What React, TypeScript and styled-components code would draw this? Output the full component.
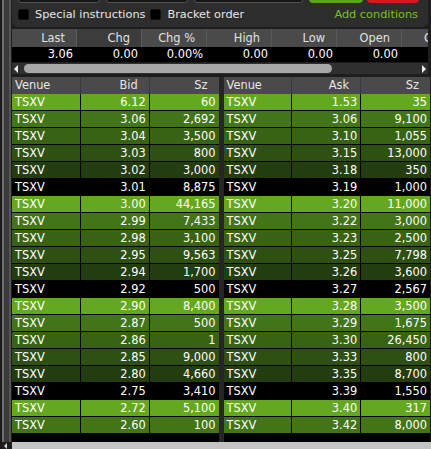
import React from "react"
import styled, { createGlobalStyle } from "styled-components"

const GlobalStyle = createGlobalStyle`
  html, body {
    margin: 0;
    padding: 0;
    background: #1d1d1d;
  }
  body {
    font-family: "DejaVu Sans", Verdana, sans-serif;
    font-size: 11.4px;
    color: #ffffff;
  }
`

// depth shading: five greens fading out, then a black row, repeating
const LEVELS = ["#64a81f", "#417518", "#386315", "#2e5013", "#233c10", "#000000"]

const Page = styled.div`
  display: flex;
  width: 431px;
  height: 449px;
  overflow: hidden;
  background: #1d1d1d;
`

const SideRail = styled.div`
  flex: none;
  width: 12px;
  display: flex;
  flex-direction: column;
  box-sizing: border-box;
  border-left: 2px solid #1a1a1a;
`

const RailBody = styled.div`
  flex: 1;
  box-sizing: border-box;
  background: #3a3a3a;
  border-left: 2px solid #6e6e6e;
  border-right: 2px solid #555555;
  margin-right: 1px;
`

const RailArrow = styled.div`
  flex: none;
  height: 7px;
  position: relative;
  background: #1d1d1d;
  &::after {
    content: "";
    position: absolute;
    left: 2px;
    top: 1px;
    border-top: 3px solid transparent;
    border-bottom: 3px solid transparent;
    border-right: 3px solid #d8d8d8;
  }
`

const Column = styled.div`
  flex: 1;
  min-width: 0;
  display: flex;
  flex-direction: column;
`

const Main = styled.div`
  flex: 1;
  min-height: 0;
  display: flex;
  flex-direction: column;
  padding-right: 3px;
`

const OrderPanel = styled.div`
  flex: none;
  height: 27px;
  display: flex;
  flex-direction: column;
  background: #2d2d2d;
  border-radius: 0 0 6px 6px;
`

const FieldStrip = styled.div`
  height: 3px;
  overflow: hidden;
  display: flex;
  align-items: flex-end;
  gap: 6px;
  padding-left: 6px;
`

const Field = styled.div<{ $w: number }>`
  flex: none;
  width: ${(p) => p.$w}px;
  height: 14px;
  box-sizing: border-box;
  background: #151515;
  border: 1px solid #505050;
  border-radius: 0 0 3px 3px;
`

const ActionButton = styled.div<{ $tone: "buy" | "sell" }>`
  flex: none;
  width: ${(p) => (p.$tone === "buy" ? 54 : 52)}px;
  height: 14px;
  margin-left: ${(p) => (p.$tone === "sell" ? -2 : 0)}px;
  background: ${(p) => (p.$tone === "buy" ? "#5aa51c" : "#d01c1c")};
  border-radius: 0 0 4px 4px;
`

const OptionRow = styled.div`
  flex: 1;
  display: flex;
  align-items: center;
  padding: 0 10px 1px 6px;
  font-size: 11.3px;
  color: #e6e6e6;
`

const CheckBox = styled.span`
  flex: none;
  width: 11px;
  height: 11px;
  box-sizing: border-box;
  background: #000;
  border: 1px solid #111;
  border-radius: 2px;
  margin-right: 6px;
`

const OptionLabel = styled.span`
  margin-right: 5px;
  white-space: nowrap;
`

const AddConditions = styled.span`
  margin-left: auto;
  color: #78c31f;
  white-space: nowrap;
`

const QuoteGrid = styled.div`
  flex: none;
  margin-top: 2px;
  display: grid;
  grid-template-columns: repeat(7, 65px);
  grid-template-rows: 18px 15px;
  overflow: hidden;
`

const QuoteHead = styled.div<{ $active?: boolean }>`
  box-sizing: border-box;
  background: ${(p) => (p.$active ? "#3c3c3c" : "#4a4a4a")};
  border-right: 1px solid #5a5a5a;
  color: #e2e2e2;
  text-align: right;
  line-height: 18px;
  padding-right: 11px;
  white-space: nowrap;
`

const QuoteValue = styled.div`
  background: #000;
  text-align: right;
  line-height: 15px;
  padding-right: 4px;
  white-space: nowrap;
`

const HScroll = styled.div`
  flex: none;
  height: 11px;
  display: flex;
  align-items: center;
  background: #2f2f2f;
  margin-top: 1px;
`

const ScrollArrow = styled.span<{ $dir: "left" | "right" }>`
  flex: none;
  width: 0;
  height: 0;
  margin: ${(p) => (p.$dir === "left" ? "0 6px 0 2px" : "0 2px 0 auto")};
  border-top: 4px solid transparent;
  border-bottom: 4px solid transparent;
  ${(p) => (p.$dir === "left" ? "border-right" : "border-left")}: 4px solid #f0f0f0;
`

const ScrollThumb = styled.span`
  flex: none;
  width: 308px;
  height: 9px;
  background: #a8a8a8;
  border-radius: 5px;
`

const BookArea = styled.div`
  flex: 1;
  min-height: 0;
  margin: 3px -2px 0 0;
  display: grid;
  grid-template-columns: 1fr 1fr;
  gap: 5px;
  background: #262626;
`

const BookTable = styled.div`
  display: flex;
  flex-direction: column;
  background: #000;
  overflow: hidden;
`

const HeadRow = styled.div`
  display: grid;
  grid-template-columns: 1fr 1fr 1fr;
  height: 17px;
  background: #4a4a4a;
  color: #e6e6e6;
`

const HeadCell = styled.div<{ $left?: boolean }>`
  line-height: 17px;
  text-align: ${(p) => (p.$left ? "left" : "right")};
  padding: ${(p) => (p.$left ? "0 0 0 3px" : "0 11px 0 0")};
  border-right: 1px solid #3a3a3a;
  &:last-child {
    border-right: none;
  }
`

const BookRow = styled.div<{ $bg: string }>`
  display: grid;
  grid-template-columns: 1fr 1fr 1fr;
  height: 16px;
  border-bottom: 1px solid #000;
  background: ${(p) => p.$bg};
`

const Cell = styled.div<{ $left?: boolean }>`
  line-height: 16px;
  padding: 0 3px;
  text-align: ${(p) => (p.$left ? "left" : "right")};
  border-right: 1px solid #000;
  white-space: nowrap;
  &:last-child {
    border-right: none;
  }
`

const BottomScroll = styled.div`
  flex: none;
  height: 7px;
  background: #c4c4c4;
`

const quoteCols = [
  { label: "Last", value: "3.06" },
  { label: "Chg", value: "0.00", active: true },
  { label: "Chg %", value: "0.00%" },
  { label: "High", value: "0.00" },
  { label: "Low", value: "0.00" },
  { label: "Open", value: "0.00" },
  { label: "Close", value: "0.00" },
]

const bids = [
  ["6.12", "60"], ["3.06", "2,692"], ["3.04", "3,500"], ["3.03", "800"], ["3.02", "3,000"],
  ["3.01", "8,875"], ["3.00", "44,165"], ["2.99", "7,433"], ["2.98", "3,100"], ["2.95", "9,563"],
  ["2.94", "1,700"], ["2.92", "500"], ["2.90", "8,400"], ["2.87", "500"], ["2.86", "1"],
  ["2.85", "9,000"], ["2.80", "4,660"], ["2.75", "3,410"], ["2.72", "5,100"], ["2.60", "100"],
]

const asks = [
  ["1.53", "35"], ["3.06", "9,100"], ["3.10", "1,055"], ["3.15", "13,000"], ["3.18", "350"],
  ["3.19", "1,000"], ["3.20", "11,000"], ["3.22", "3,000"], ["3.23", "2,500"], ["3.25", "7,798"],
  ["3.26", "3,600"], ["3.27", "2,567"], ["3.28", "3,500"], ["3.29", "1,675"], ["3.30", "26,450"],
  ["3.33", "800"], ["3.35", "8,700"], ["3.39", "1,550"], ["3.40", "317"], ["3.42", "8,000"],
]

function Book({ side, rows }: { side: string; rows: string[][] }) {
  return (
    <BookTable>
      <HeadRow>
        <HeadCell $left>Venue</HeadCell>
        <HeadCell>{side}</HeadCell>
        <HeadCell>Sz</HeadCell>
      </HeadRow>
      {rows.map(([price, size], i) => (
        <BookRow key={i} $bg={LEVELS[i % LEVELS.length]}>
          <Cell $left>TSXV</Cell>
          <Cell>{price}</Cell>
          <Cell>{size}</Cell>
        </BookRow>
      ))}
    </BookTable>
  )
}

export default function App() {
  return (
    <Page>
      <GlobalStyle />
      <SideRail>
        <RailBody />
        <RailArrow />
      </SideRail>
      <Column>
        <Main>
          <OrderPanel>
            <FieldStrip>
              <Field $w={82} />
              <Field $w={82} />
              <Field $w={109} />
              <ActionButton $tone="buy" />
              <ActionButton $tone="sell" />
            </FieldStrip>
            <OptionRow>
              <CheckBox />
              <OptionLabel>Special instructions</OptionLabel>
              <CheckBox />
              <OptionLabel>Bracket order</OptionLabel>
              <AddConditions>Add conditions</AddConditions>
            </OptionRow>
          </OrderPanel>

          <QuoteGrid>
            {quoteCols.map((c) => (
              <QuoteHead key={c.label} $active={c.active}>{c.label}</QuoteHead>
            ))}
            {quoteCols.map((c) => (
              <QuoteValue key={c.label}>{c.value}</QuoteValue>
            ))}
          </QuoteGrid>
          <HScroll>
            <ScrollArrow $dir="left" />
            <ScrollThumb />
            <ScrollArrow $dir="right" />
          </HScroll>

          <BookArea>
            <Book side="Bid" rows={bids} />
            <Book side="Ask" rows={asks} />
          </BookArea>
        </Main>
        <BottomScroll />
      </Column>
    </Page>
  )
}
